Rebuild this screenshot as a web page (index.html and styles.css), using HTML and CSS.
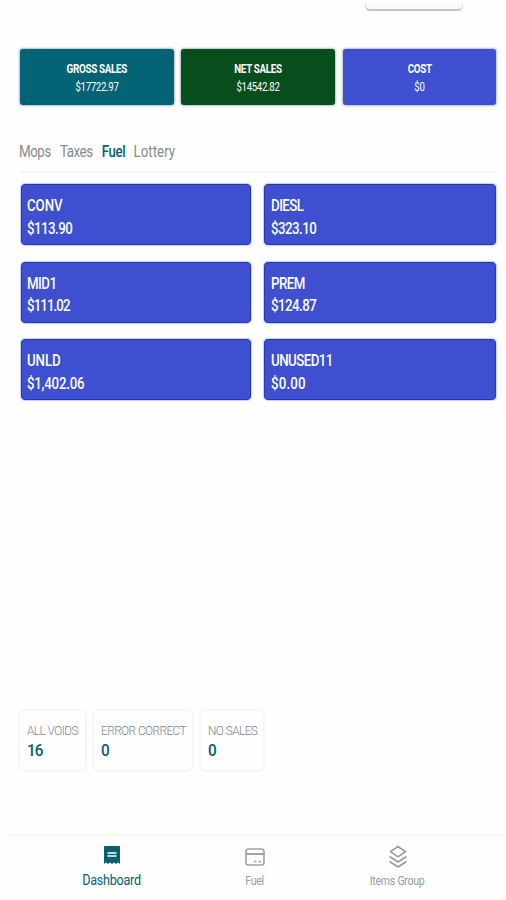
FILE: index.html
```
<!DOCTYPE html>
<html lang="en">
<head>
<meta charset="utf-8">
<title>Dashboard</title>
<link rel="stylesheet" href="styles.css">
</head>
<body>
<main class="screen">
  <div class="top"><div class="picker"></div></div>
  <section class="totals">
    <div class="total gross"><b>GROSS SALES</b><span>$17722.97</span></div>
    <div class="total net"><b>NET SALES</b><span>$14542.82</span></div>
    <div class="total cost"><b>COST</b><span>$0</span></div>
  </section>
  <nav class="tabs">
    <div class="tablist"><a>Mops</a><a>Taxes</a><a class="active">Fuel</a><a class="lottery">Lottery</a></div>
  </nav>
  <section class="fuels">
    <div class="fuel"><span class="conv">CONV</span><span>$113.90</span></div>
    <div class="fuel"><span>DIESL</span><span>$323.10</span></div>
    <div class="fuel"><span>MID1</span><span class="tight">$111.02</span></div>
    <div class="fuel"><span>PREM</span><span>$124.87</span></div>
    <div class="fuel"><span class="conv">UNLD</span><span class="large">$1,402.06</span></div>
    <div class="fuel"><span>UNUSED11</span><span class="wide">$0.00</span></div>
  </section>
  <section class="counts">
    <div class="count voids"><span>ALL VOIDS</span><strong>16</strong></div>
    <div class="count errors"><span>ERROR CORRECT</span><strong>0</strong></div>
    <div class="count nosales"><span>NO SALES</span><strong>0</strong></div>
  </section>
  <nav class="bottom">
    <a class="item current">
      <svg width="18" height="20" viewBox="0 0 18 20"><path fill="#07606f" d="M2 1h14q1 0 1 1v17l-2-1.5-2 1.5-2-1.5L9 19l-2-1.5L5 19l-2-1.5L1 19V2q0-1 1-1z"/><path stroke="#fff" stroke-width="1.5" d="M4.500 8h9M4.500 11h9"/></svg>
      <span>Dashboard</span>
    </a>
    <a class="item">
      <svg width="20" height="18" viewBox="0 0 20 18" fill="none" stroke="#a0a4a8"><rect x="1" y="1" width="18" height="16" rx="2.500" stroke-width="1.600"/><path stroke-width="2" d="M1 6h18"/><path stroke-width="1.500" d="M9 13.500h2.500M13.500 13.500h2.500"/></svg>
      <span>Fuel</span>
    </a>
    <a class="item">
      <svg width="20" height="24" viewBox="0 0 20 24" fill="none" stroke="#969b9f" stroke-width="1.600" stroke-linejoin="round"><path d="M10 1.500l7.500 5.200-7.500 5.200-7.500-5.200zM1.500 11.500l8.500 5.500 8.500-5.500M1.500 16.500l8.500 5.500 8.500-5.500"/></svg>
      <span>Items Group</span>
    </a>
  </nav>
</main>
</body>
</html>
```
FILE: styles.css
```
* { box-sizing: border-box; }
body { margin: 0; background: #fefefe; font-family: Roboto, "Liberation Sans", sans-serif; }
.screen { width: 506px; height: 900px; display: flex; flex-direction: column; overflow: hidden; }
.top { height: 49px; padding: 4px 43px 0 0; display: flex; justify-content: flex-end; }
.picker { width: 98px; height: 7px; border: 1px solid #ddd; border-top: 0; border-bottom: 2px solid #c5c5c5; border-radius: 0 0 5px 5px; background: #fafafa; }
.totals { height: 56px; padding: 0 10px 0 20px; display: grid; grid-template-columns: repeat(3, 153.5px); gap: 7.8px; }
.total { border-radius: 3px; box-shadow: 0 0 2px 1px rgba(90, 110, 130, .45); color: #fff; display: flex; flex-direction: column; align-items: center; padding-top: 13px; }
.total b { font-size: 12px; line-height: 15px; font-weight: 700; letter-spacing: -.4px; transform: scaleX(.82); }
.total span { font-size: 12px; line-height: 21px; letter-spacing: -.35px; transform: scaleX(.8); }
.gross { background: #026375; }
.net { background: #084d1c; }
.cost { background: #3e50d0; }
.tabs { height: 68px; margin: 0 10px 0 20px; padding-top: 37px; border-bottom: 2px solid #f7f7f7; }
.tablist { display: flex; gap: 11px; width: max-content; margin-left: -1px; font-size: 16px; line-height: 20px; letter-spacing: -.5px; color: #858a90; transform: scaleX(.83); transform-origin: left; }
.tablist .active { color: #07606f; font-weight: 500; }
.tablist .lottery { letter-spacing: .05px; margin-left: -1px; }
.fuels { padding: 11.4px 0 0 20.5px; display: grid; grid-template-columns: 230.5px 231.5px; column-gap: 13px; row-gap: 16.5px; grid-auto-rows: 61px; }
.fuel { background: #3e50d0; border: 1px solid #2139bd; border-radius: 4px; box-shadow: 0 0 1px 1px #c7cdf5; color: #fff; padding: 10px 6px 0 5px; display: flex; flex-direction: column; font-size: 16px; line-height: 22.5px; font-weight: 500; letter-spacing: -.65px; }
.fuel span { transform: scaleX(.83); transform-origin: left; }
.fuel:nth-child(even) { padding-left: 6px; }
.fuel .wide { letter-spacing: .2px; }
.fuel .conv { letter-spacing: -.1px; }
.fuel .large { letter-spacing: -.3px; }
.fuel .tight { letter-spacing: -1.1px; }
.counts { margin: auto 0 62px 18px; display: flex; gap: 5px; }
.count { height: 63px; border: 2px solid #f5f7f7; border-radius: 7px; padding: 10px 7px 0; display: flex; flex-direction: column; white-space: nowrap; }
.count span { font-size: 13px; line-height: 20px; letter-spacing: -.6px; color: #808488; font-weight: 300; transform: scaleX(.91); transform-origin: left; }
.count strong { font-size: 17px; line-height: 19px; font-weight: 500; letter-spacing: -1px; color: #07606f; transform: scaleX(.9); transform-origin: left; }
.voids { width: 69px; }
.errors { width: 102px; }
.nosales { width: 66px; }
.bottom { height: 66px; margin: 0 0 0 8px; padding: 0 30px 0 32px; border-top: 2px solid #f7f7f7; display: grid; grid-template-columns: repeat(3, 143px); }
.item { display: grid; grid-template-rows: 42px 17px; align-content: start; justify-items: center; align-items: center; color: #969b9f; font-size: 12px; letter-spacing: -.3px; }
.item span { line-height: 16px; margin-top: -11px; transform: scaleX(.88); }
.current { color: #07606f; font-size: 14px; }
.current svg { margin-top: -4px; }
.current span { margin-top: -13px; transform: scaleX(.9); }
```
